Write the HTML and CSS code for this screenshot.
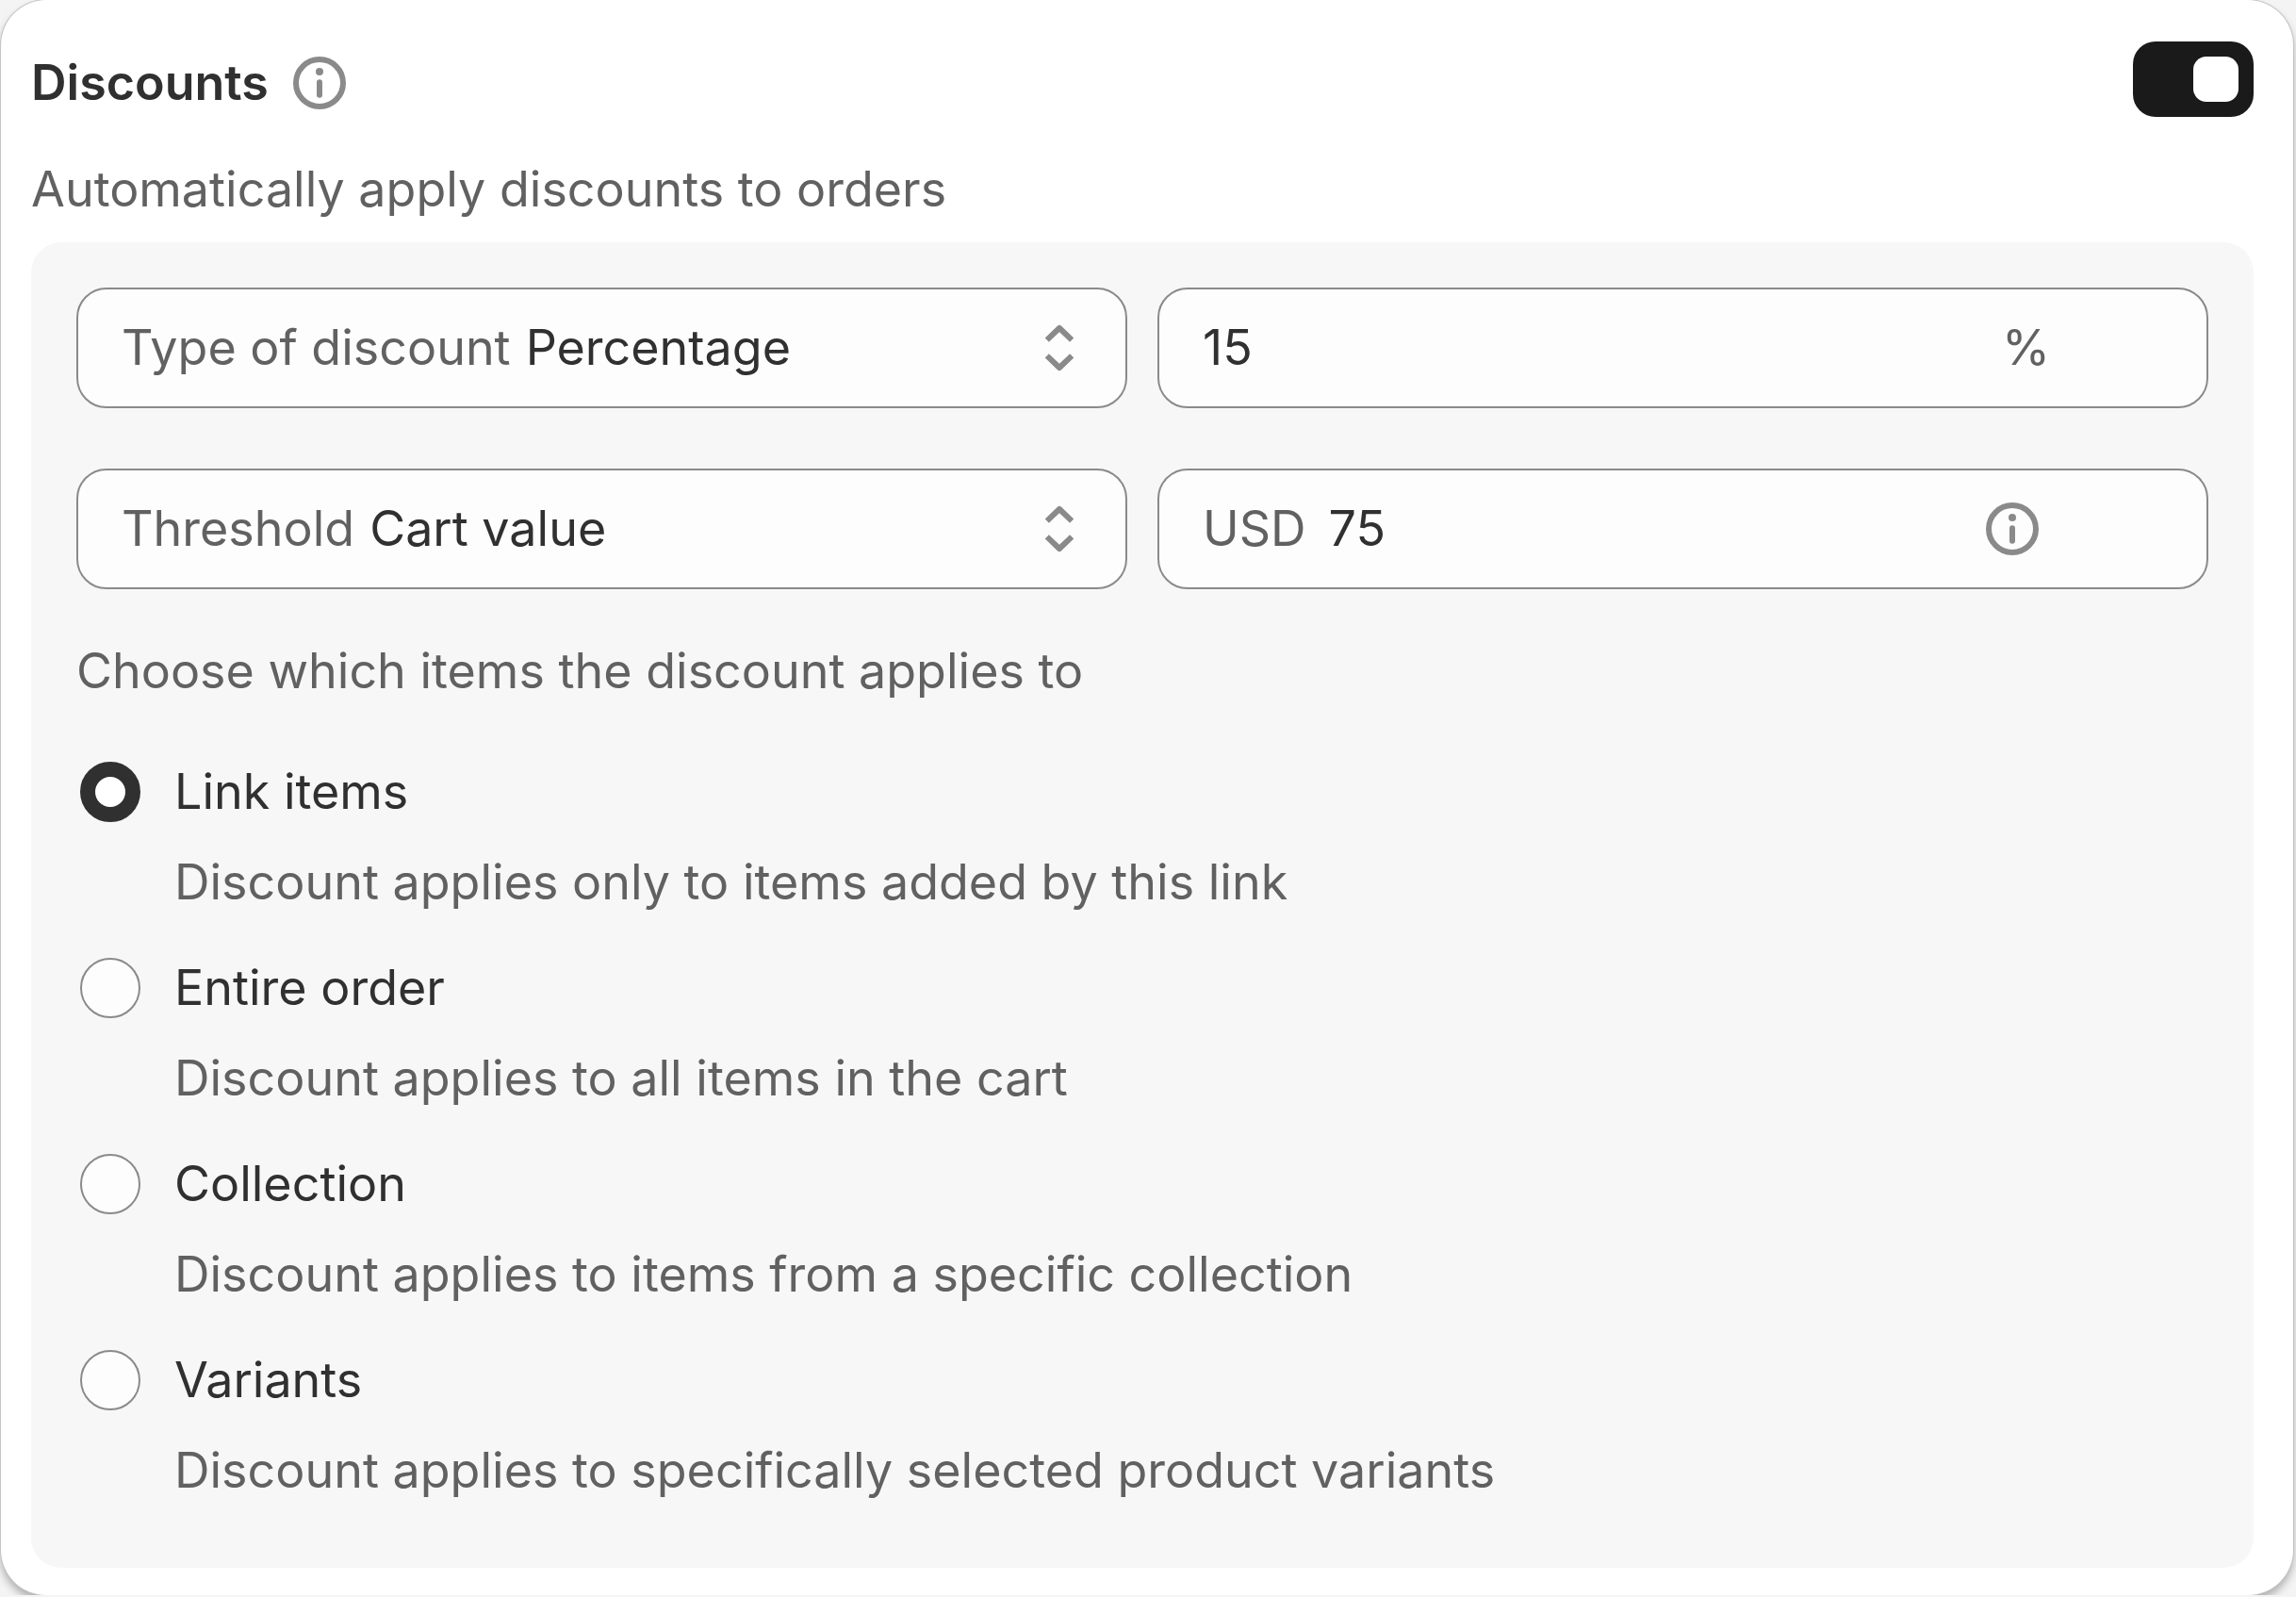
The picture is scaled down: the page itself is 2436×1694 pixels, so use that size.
FILE: index.html
```html
<!DOCTYPE html>
<html lang="en">
<head>
  <meta charset="UTF-8">
  <title>Discounts</title>
  <link rel="stylesheet" href="styles.css">
</head>
<body>
  <section class="card">
    <header class="card-header">
      <h2 id="discountsTitle">Discounts</h2>
      <button type="button" class="icon-button" aria-label="About discounts">
        <svg class="icon" viewBox="0 0 20 20">
          <circle cx="10" cy="10" r="6.25" />
          <path d="M10 9.8v3.4" />
          <circle class="dot" cx="10" cy="7" r="1" />
        </svg>
      </button>
      <button type="button" class="toggle" role="switch" aria-checked="true" aria-labelledby="discountsTitle">
        <span class="knob"></span>
      </button>
    </header>
    <p class="subdued">Automatically apply discounts to orders</p>

    <form class="panel">
      <div class="fields">
        <div class="field">
          <label for="discountType">Type of discount</label>
          <select id="discountType">
            <option>Percentage</option>
            <option>Fixed amount</option>
          </select>
          <svg class="icon" viewBox="0 0 20 20">
            <path class="chevron" d="M6.7 7.9L10 4.75l3.3 3.15M6.7 12.1l3.3 3.15 3.3-3.15" />
          </svg>
        </div>
        <div class="field with-spinner">
          <input type="text" id="discountValue" value="15" aria-label="Discount value">
          <label for="discountValue">%</label>
        </div>
        <div class="field">
          <label for="threshold">Threshold</label>
          <select id="threshold">
            <option>Cart value</option>
            <option>Quantity</option>
          </select>
          <svg class="icon" viewBox="0 0 20 20">
            <path class="chevron" d="M6.7 7.9L10 4.75l3.3 3.15M6.7 12.1l3.3 3.15 3.3-3.15" />
          </svg>
        </div>
        <div class="field with-spinner">
          <label for="thresholdValue" class="prefix">USD</label>
          <input type="text" id="thresholdValue" value="75">
          <button type="button" class="icon-button" aria-label="About threshold">
            <svg class="icon" viewBox="0 0 20 20">
              <circle cx="10" cy="10" r="6.25" />
              <path d="M10 9.8v3.4" />
              <circle class="dot" cx="10" cy="7" r="1" />
            </svg>
          </button>
        </div>
      </div>

      <fieldset class="choices">
        <legend>Choose which items the discount applies to</legend>
        <div class="choice">
          <input type="radio" name="appliesTo" id="linkItems" checked>
          <label for="linkItems">Link items</label>
          <p class="subdued">Discount applies only to items added by this link</p>
        </div>
        <div class="choice">
          <input type="radio" name="appliesTo" id="entireOrder">
          <label for="entireOrder">Entire order</label>
          <p class="subdued">Discount applies to all items in the cart</p>
        </div>
        <div class="choice">
          <input type="radio" name="appliesTo" id="collection">
          <label for="collection">Collection</label>
          <p class="subdued">Discount applies to items from a specific collection</p>
        </div>
        <div class="choice">
          <input type="radio" name="appliesTo" id="variants">
          <label for="variants">Variants</label>
          <p class="subdued">Discount applies to specifically selected product variants</p>
        </div>
      </fieldset>
    </form>
  </section>
</body>
</html>
```
FILE: styles.css
```css
* {
  box-sizing: border-box;
}

body {
  margin: 0;
  background-color: #f4f4f4;
  color: #303030;
  font-family: Inter, sans-serif;
  font-size: 52px;
  font-weight: 400;
  line-height: 80px;
}

h2, p {
  margin: 0;
  font-size: 52px;
}

h2 {
  font-weight: 600;
}

input, select, button {
  margin: 0;
  padding: 0;
  border: none;
  background: none;
  color: inherit;
  font: inherit;
}

.card {
  margin: 0 3px 0 1px;
  padding: 44px 42px 29px 32px;
  border-radius: 48px;
  background-color: #fff;
  box-shadow: 0 0 0 1px #c4c4c4, 0 6px 10px rgba(0, 0, 0, 0.3);
}

.card-header {
  display: flex;
  align-items: flex-start;
  gap: 14px;
  margin-bottom: 33px;
}

.card-header h2,
.card-header .icon-button {
  margin-top: 4px;
}

.subdued {
  color: #616161;
}

.icon {
  display: block;
  width: 80px;
  height: 80px;
  fill: none;
  stroke: #8a8a8a;
  stroke-width: 1.5;
  stroke-linecap: round;
  stroke-linejoin: round;
}

.icon .dot {
  fill: #8a8a8a;
  stroke: none;
}

.icon .chevron {
  stroke-linecap: butt;
}

.icon-button {
  cursor: pointer;
}

/* On/off switch */
.toggle {
  display: flex;
  justify-content: flex-end;
  width: 128px;
  height: 80px;
  margin-left: auto;
  padding: 16px;
  border-radius: 24px;
  background-color: #1a1a1a;
  cursor: pointer;
}

.knob {
  width: 48px;
  height: 48px;
  border-radius: 14px;
  background-color: #fff;
}

.panel {
  margin-top: 16px;
  padding: 48px 48px 63px;
  border-radius: 32px;
  background-color: #f7f7f7;
}

.fields {
  display: grid;
  grid-template-columns: repeat(2, minmax(0, 1fr));
  gap: 64px 32px;
}

.field {
  display: flex;
  align-items: center;
  height: 128px;
  padding: 0 30px 0 46px;
  border: 2px solid #8a8a8a;
  border-radius: 32px;
  background-color: #fdfdfd;
}

.field label {
  color: #616161;
}

.field select {
  flex: 1;
  min-width: 0;
  height: 80px;
  margin-left: 16px;
  appearance: none;
}

.field input {
  flex: 1;
  min-width: 0;
  height: 80px;
}

.field .prefix {
  margin-right: 24px;
}

.with-spinner {
  padding-right: 166px;
}

.choices {
  display: flex;
  flex-direction: column;
  gap: 32px;
  margin: 47px 0 0;
  padding: 0;
  border: none;
}

.choices legend {
  margin-bottom: 48px;
  padding: 0;
  color: #616161;
}

.choice {
  display: grid;
  grid-template-columns: 72px 1fr;
  align-items: center;
  gap: 16px 32px;
}

.choice p {
  grid-column: 2;
}

.choice input {
  width: 64px;
  height: 64px;
  margin-left: 4px;
  border: 2px solid #8a8a8a;
  border-radius: 50%;
  background-color: #fdfdfd;
  appearance: none;
}

.choice input:checked {
  border: 16px solid #303030;
  background-color: #fff;
}
```
